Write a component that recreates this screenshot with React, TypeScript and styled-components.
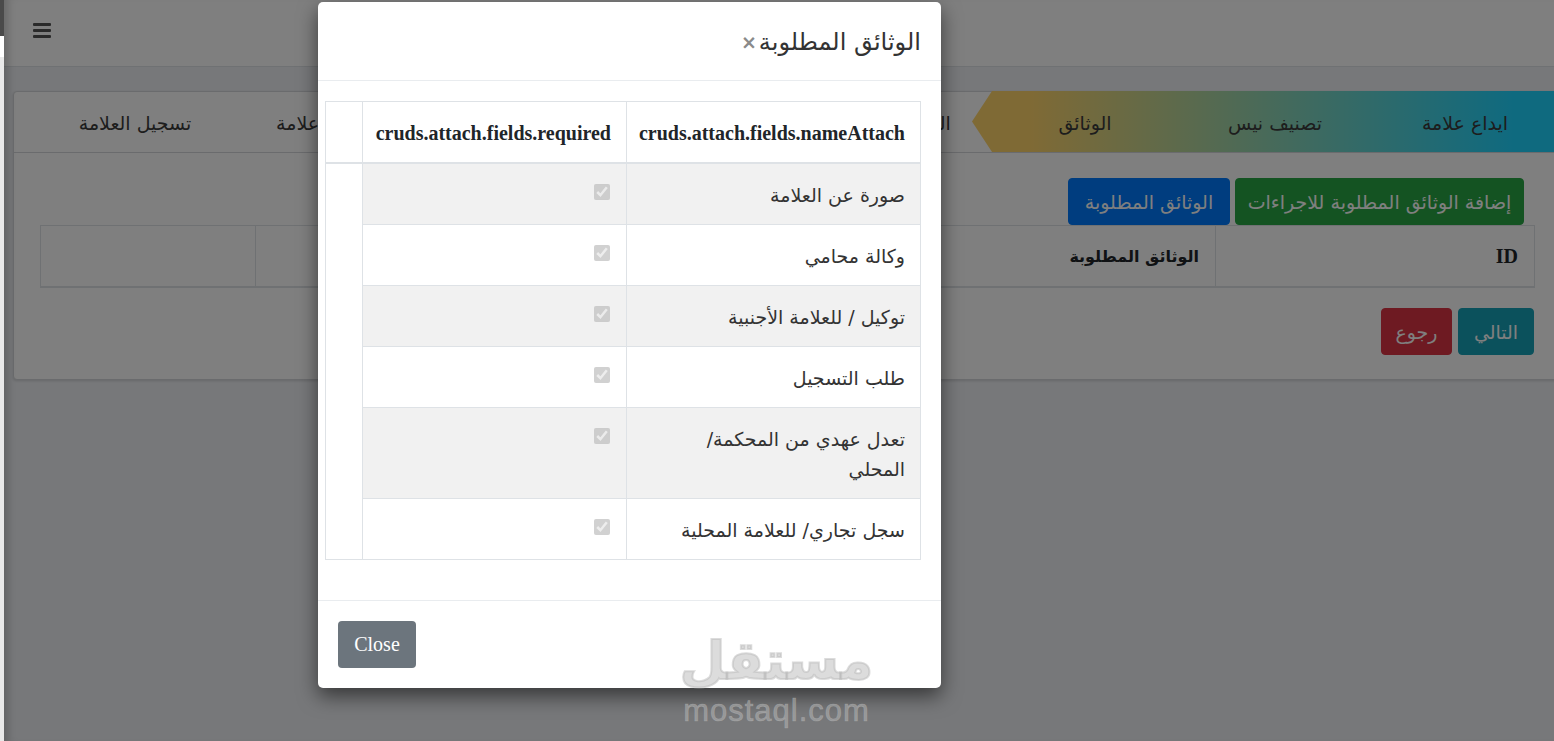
import React from "react";
import styled, { createGlobalStyle } from "styled-components";

const GlobalStyle = createGlobalStyle`
  html, body {
    margin: 0;
    padding: 0;
    height: 100%;
    overflow: hidden;
    background: #fff;
  }
  #root {
    height: 100%;
  }
`;

const arabic = `"DejaVu Sans", "Noto Sans", sans-serif`;
const serif = `"Liberation Serif", "DejaVu Sans", serif`;

const Screen = styled.div`
  display: flex;
  height: 741px;
  width: 1554px;
  overflow: hidden;
  font-family: ${arabic};
`;

const EdgeStrip = styled.div`
  flex: 0 0 4px;
  display: flex;
  flex-direction: column;
  background: #e9e9e9;
`;

const EdgeDark = styled.div`
  height: 36px;
  background: #4a4a4a;
`;

const EdgeWhite = styled.div`
  height: 21px;
  background: #ffffff;
`;

const Main = styled.div`
  position: relative;
  flex: 1;
  min-width: 0;
  background: #eff1f5;
`;

const TopBar = styled.header`
  box-sizing: content-box;
  height: 60px;
  background: #ffffff;
  border-bottom: 1px solid #dee2e6;
  display: flex;
  align-items: center;
  padding-left: 29px;
  padding-bottom: 6px;
`;

const Content = styled.main`
  width: 1548px;
  padding: 24px 0 0 9px;
`;

const Card = styled.section`
  width: 1548px;
  height: 289px;
  background: #ffffff;
  border: 1px solid #d5d7da;
  border-radius: 4px;
  box-sizing: border-box;
  box-shadow: 0 1px 3px rgba(0, 0, 0, 0.15);
`;

const Steps = styled.div`
  direction: rtl;
  display: flex;
  height: 61px;
  margin-top: -1px;
  padding-left: 26px;
  border-bottom: 1px solid #d5d7da;
`;

const StepsDone = styled.div`
  display: flex;
  flex: 0 0 auto;
  margin-left: -18px;
  padding-left: 18px;
  background: linear-gradient(270deg, #1fd4ff 8%, #ffd46b 90%);
  clip-path: polygon(100% 0, 100% 100%, 20px 100%, 0 50%, 20px 0);
`;

const Step = styled.div`
  flex: 0 0 190px;
  box-sizing: border-box;
  padding-top: 2px;
  display: flex;
  align-items: center;
  justify-content: center;
  font-size: 19px;
  color: #3a3a3a;
  white-space: nowrap;
`;

const CardBody = styled.div`
  padding: 25px 26px 0;
`;

const ActionRow = styled.div`
  direction: rtl;
  display: flex;
  gap: 5px;
  padding-right: 10px;
`;

const Button = styled.button<{ $bg: string; $wide: number }>`
  font-family: ${arabic};
  font-size: 19px;
  height: 47px;
  width: ${({ $wide }) => $wide}px;
  padding: 0;
  color: #ffffff;
  background: ${({ $bg }) => $bg};
  border: 1px solid ${({ $bg }) => $bg};
  border-radius: 4px;
  white-space: nowrap;
`;

const PageTable = styled.table`
  width: 1494px;
  direction: rtl;
  table-layout: fixed;
  border-collapse: collapse;
  th {
    height: 60px;
    padding: 0 16px;
    text-align: right;
    color: #212529;
    border: 1px solid #dee2e6;
    border-bottom-width: 2px;
    font-size: 16px;
  }
`;

const IdHead = styled.th`
  font-family: ${serif};
  font-size: 20px !important;
`;

const NextRow = styled.div`
  direction: rtl;
  display: flex;
  gap: 6px;
  margin-top: 20px;
`;

const Backdrop = styled.div`
  position: absolute;
  inset: 0;
  background: rgba(0, 0, 0, 0.5);
  box-shadow: inset 10px 0 8px -6px rgba(0, 0, 0, 0.18);
`;

const Modal = styled.div`
  position: absolute;
  left: 314px;
  top: 2px;
  width: 623px;
  height: 686px;
  direction: rtl;
  display: flex;
  flex-direction: column;
  background: #ffffff;
  border-radius: 5px;
  box-shadow: 0 8px 20px rgba(0, 0, 0, 0.55);
`;

const ModalHeader = styled.div`
  flex: 0 0 79px;
  box-sizing: border-box;
  display: flex;
  align-items: center;
  gap: 2px;
  padding: 2px 20px 0;
  border-bottom: 1px solid #e9ecef;
`;

const ModalTitle = styled.h5`
  margin: 0;
  font-size: 24px;
  font-weight: 400;
  color: #333333;
`;

const Dismiss = styled.span`
  font-family: ${arabic};
  font-size: 19px;
  font-weight: 700;
  line-height: 1;
  color: #8a8a8a;
`;

const ModalBody = styled.div`
  flex: 1;
  padding: 20px 20px 0 0;
`;

const AttachTable = styled.table`
  width: 595px;
  table-layout: fixed;
  border-collapse: collapse;
  color: #333333;
`;

const AttachHead = styled.th`
  height: 61px;
  box-sizing: border-box;
  padding: 4px 15px 0;
  font-family: ${serif};
  font-size: 20px;
  font-weight: 700;
  text-align: right;
  color: #212529;
  border: 1px solid #dee2e6;
  border-bottom-width: 2px;
`;

const AttachRow = styled.tr<{ $striped: boolean }>`
  background: ${({ $striped }) => ($striped ? "#f1f1f1" : "#ffffff")};
`;

const NameCell = styled.td`
  padding: 16px 15px 14px;
  font-size: 19px;
  line-height: 30px;
  text-align: right;
  vertical-align: top;
  white-space: pre-line;
  border: 1px solid #dee2e6;
`;

const CheckCell = styled.td`
  padding: 20px 16px 0;
  vertical-align: top;
  border: 1px solid #dee2e6;
  line-height: 0;
`;

const EmptyCell = styled.td`
  background: #ffffff;
  border: 1px solid #dee2e6;
`;

const Tick = styled.input`
  margin: 0;
  width: 16px;
  height: 16px;
`;

const ModalFooter = styled.div`
  flex: 0 0 88px;
  box-sizing: border-box;
  display: flex;
  justify-content: flex-end;
  padding: 20px;
  border-top: 1px solid #e9ecef;
`;

const CloseButton = styled.button`
  width: 78px;
  height: 47px;
  padding: 0;
  font-family: ${serif};
  font-size: 20px;
  color: #ffffff;
  background: #6c757d;
  border: none;
  border-radius: 4px;
`;

const Watermark = styled.div`
  position: absolute;
  left: 679px;
  top: 626px;
  width: 187px;
  display: flex;
  flex-direction: column;
  align-items: center;
  pointer-events: none;
  color: rgba(185, 185, 185, 0.5);
`;

const WatermarkArabic = styled.div`
  font-family: ${arabic};
  font-size: 53px;
  font-weight: 700;
  line-height: 70px;
  direction: rtl;
  -webkit-text-stroke: 2px rgba(185, 185, 185, 0.5);
`;

const WatermarkLatin = styled.div`
  font-family: "Liberation Sans", sans-serif;
  font-size: 31px;
  line-height: 30px;
  letter-spacing: 1px;
  white-space: nowrap;
  -webkit-text-stroke: 0.6px rgba(185, 185, 185, 0.5);
`;

const doneSteps = ["ايداع علامة", "تصنيف نيس", "الوثائق"];
const laterSteps = ["الفحص والدفع", "", "", "شهادة علامة", "تسجيل العلامة"];
const attachments = [
  "صورة عن العلامة",
  "وكالة محامي",
  "توكيل / للعلامة الأجنبية",
  "طلب التسجيل",
  "تعدل عهدي من المحكمة/\nالمحلي",
  "سجل تجاري/ للعلامة المحلية",
];

const App = () => {
  return (
    <Screen>
      <GlobalStyle />
      <EdgeStrip>
        <EdgeDark />
        <EdgeWhite />
      </EdgeStrip>
      <Main>
        <TopBar>
          <svg width="18" height="15" viewBox="0 0 18 15" fill="#555">
            <rect width="18" height="3" y="0" rx="1" />
            <rect width="18" height="3" y="6" rx="1" />
            <rect width="18" height="3" y="12" rx="1" />
          </svg>
        </TopBar>
        <Content>
          <Card>
            <Steps>
              <StepsDone>
                {doneSteps.map((s) => (
                  <Step key={s}>{s}</Step>
                ))}
              </StepsDone>
              {laterSteps.map((s, i) => (
                <Step key={i}>{s}</Step>
              ))}
            </Steps>
            <CardBody>
              <ActionRow>
                <Button $bg="#28a745" $wide={289}>
                  إضافة الوثائق المطلوبة للاجراءات
                </Button>
                <Button $bg="#007bff" $wide={162}>
                  الوثائق المطلوبة
                </Button>
              </ActionRow>
              <PageTable>
                <colgroup>
                  <col width="319" />
                  <col width="960" />
                  <col width="215" />
                </colgroup>
                <thead>
                  <tr>
                    <IdHead>ID</IdHead>
                    <th>الوثائق المطلوبة</th>
                    <th></th>
                  </tr>
                </thead>
              </PageTable>
              <NextRow>
                <Button $bg="#17a2b8" $wide={76}>
                  التالي
                </Button>
                <Button $bg="#dc3545" $wide={71}>
                  رجوع
                </Button>
              </NextRow>
            </CardBody>
          </Card>
        </Content>
        <Backdrop />
        <Modal>
          <ModalHeader>
            <ModalTitle>الوثائق المطلوبة</ModalTitle>
            <Dismiss>×</Dismiss>
          </ModalHeader>
          <ModalBody>
            <AttachTable>
              <colgroup>
                <col width="294" />
                <col width="264" />
                <col width="37" />
              </colgroup>
              <thead>
                <tr>
                  <AttachHead>cruds.attach.fields.nameAttach</AttachHead>
                  <AttachHead>cruds.attach.fields.required</AttachHead>
                  <AttachHead></AttachHead>
                </tr>
              </thead>
              <tbody>
                {attachments.map((name, i) => (
                  <AttachRow key={name} $striped={i % 2 === 0}>
                    <NameCell>{name}</NameCell>
                    <CheckCell>
                      <Tick type="checkbox" checked disabled readOnly />
                    </CheckCell>
                    {i === 0 && <EmptyCell rowSpan={attachments.length} />}
                  </AttachRow>
                ))}
              </tbody>
            </AttachTable>
          </ModalBody>
          <ModalFooter>
            <CloseButton>Close</CloseButton>
          </ModalFooter>
        </Modal>
        <Watermark>
          <WatermarkArabic>مستقل</WatermarkArabic>
          <WatermarkLatin>mostaql.com</WatermarkLatin>
        </Watermark>
      </Main>
    </Screen>
  );
};

export default App;
